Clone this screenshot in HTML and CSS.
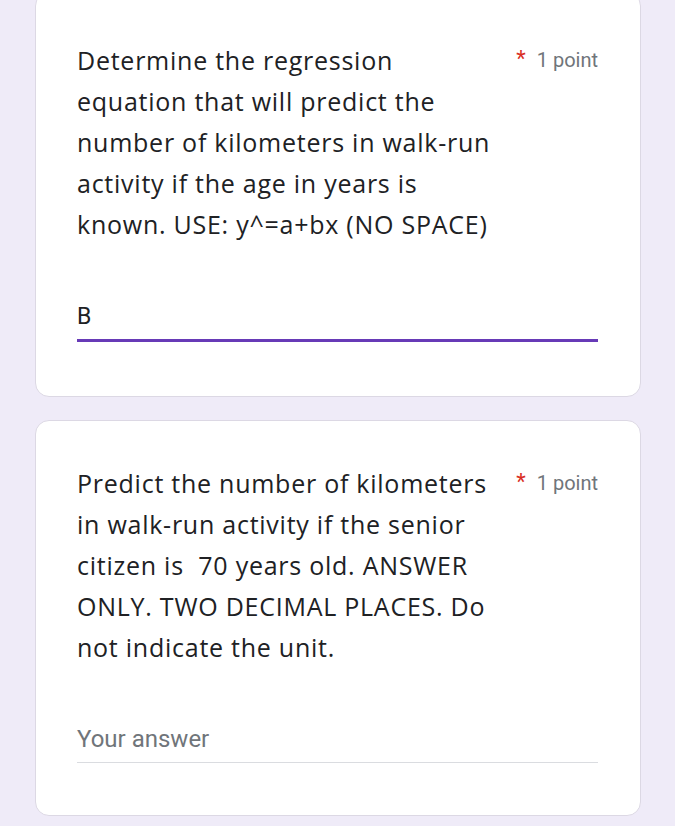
FILE: index.html
```html
<!DOCTYPE html>
<html>
<head>
<meta charset="utf-8">
<link rel="stylesheet" href="styles.css">
</head>
<body>
<main class="page">
  <section class="card card-first">
    <div class="head">
      <div class="question">Determine the regression<br>equation that will predict the<br>number of kilometers in walk-run<br>activity if the age in years is<br>known. USE: y^=a+bx (NO SPACE)</div>
      <div class="points"><span class="star">*</span><span class="pt">1 point</span></div>
    </div>
    <div class="answer filled">
      <div class="value">B</div>
      <div class="line active"></div>
    </div>
  </section>
  <section class="card card-second">
    <div class="head">
      <div class="question">Predict the number of kilometers<br>in walk-run activity if the senior<br>citizen is&nbsp; 70 years old. ANSWER<br>ONLY. TWO DECIMAL PLACES. Do<br>not indicate the unit.</div>
      <div class="points"><span class="star">*</span><span class="pt">1 point</span></div>
    </div>
    <div class="answer empty">
      <div class="placeholder">Your answer</div>
      <div class="line"></div>
    </div>
  </section>
</main>
</body>
</html>
```
FILE: styles.css
```css
html, body {
  margin: 0;
  padding: 0;
  background: #efebf8;
}
.page {
  display: flex;
  flex-direction: column;
  gap: 23px;
  padding: 0 34px 0 35px;
  margin-top: -8px;
}
.card {
  background: #ffffff;
  border: 1px solid #dcd8e4;
  border-radius: 14px;
  padding: 0 42px 0 41px;
  box-sizing: border-box;
}
.card-first {
  height: 405px;
  padding-top: 47px;
}
.card-second {
  height: 396px;
  padding-top: 42px;
}
.head {
  display: flex;
  justify-content: space-between;
  align-items: flex-start;
}
.question {
  font-family: "Open Sans", sans-serif;
  font-size: 25px;
  letter-spacing: 0.75px;
  line-height: 41px;
  color: #202124;
  white-space: nowrap;
}
.points {
  display: flex;
  align-items: flex-start;
  gap: 11px;
  padding-top: 8px;
  font-family: Roboto, sans-serif;
}
.star {
  color: #d93025;
  font-size: 22px;
  line-height: 22px;
}
.pt {
  color: #70757a;
  font-size: 20px;
  line-height: 24px;
}
.answer {
  font-family: Roboto, sans-serif;
}
.filled {
  padding-top: 58px;
}
.empty {
  padding-top: 57px;
}
.value {
  font-size: 23px;
  line-height: 28px;
  color: #202124;
  padding-bottom: 8px;
}
.placeholder {
  font-size: 24px;
  line-height: 28px;
  color: #70757a;
  padding-bottom: 9px;
}
.line {
  height: 1px;
  background: #dadce0;
}
.line.active {
  height: 3px;
  background: #673ab7;
}
```
